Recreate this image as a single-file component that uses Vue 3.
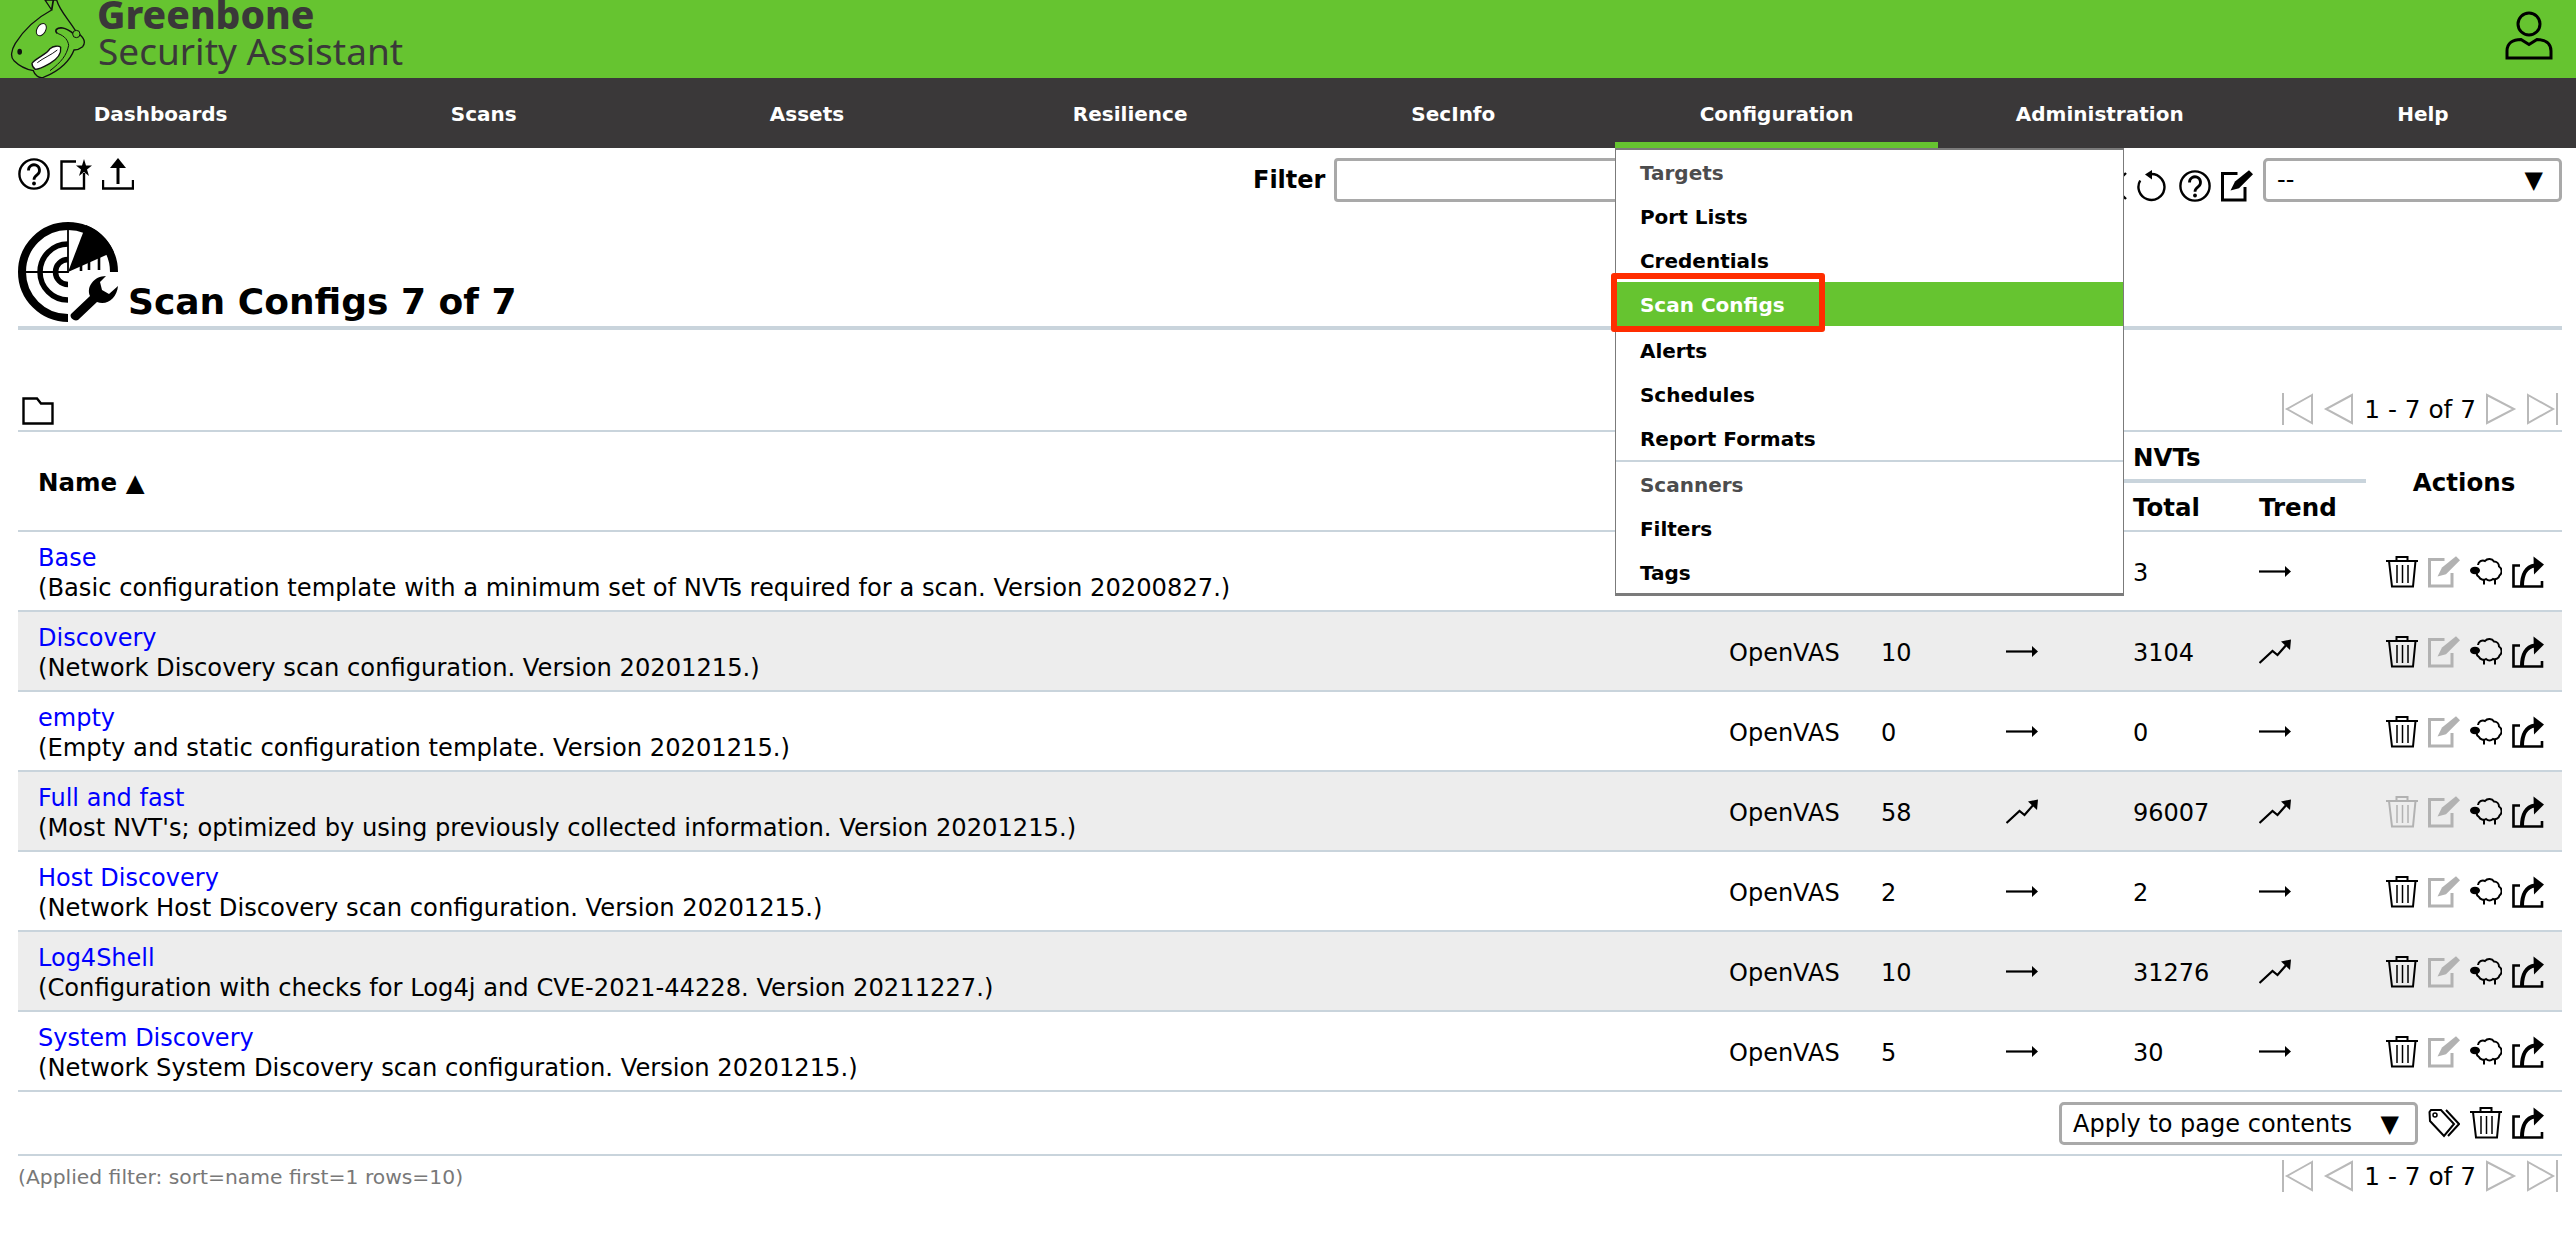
<template>
  <div class="page">
    <!-- shared icons -->
    <svg class="sprite" xmlns="http://www.w3.org/2000/svg">
      <symbol id="i-help" viewBox="0 0 32 32">
        <circle cx="16" cy="16" r="14.6" fill="none" stroke="currentColor" stroke-width="2.4" />
        <path d="M10.5 12.5a5.500 5.500 0 1 1 8.800 4.200c-2 1.500-3.300 2.500-3.300 5" fill="none" stroke="currentColor" stroke-width="2.8" />
        <circle cx="16" cy="25.500" r="1.900" fill="currentColor" />
      </symbol>
      <symbol id="i-edit" viewBox="0 0 32 32">
        <path d="M16.500 3.500H1.500V30H24V17" fill="none" stroke="currentColor" stroke-width="3" />
        <path d="M9.500 20.500L14 11.500L28 0.300L32 4.300L18 18.300Z" fill="currentColor" />
      </symbol>
      <symbol id="i-trash" viewBox="0 0 32 32">
        <path d="M0 5H32M10.500 5V1H21.500V5M3 5L6 30.500H27L29.500 5" fill="none" stroke="currentColor" stroke-width="2" />
        <path d="M11 9V27M16.500 9V27M22 9V27" fill="none" stroke="currentColor" stroke-width="1.500" />
      </symbol>
      <symbol id="i-sheep" viewBox="0 0 32 32">
        <path d="M8 9a5 5 0 0 1 7-4a5.500 5.500 0 0 1 9 .5a5 5 0 0 1 5 5a5.500 5.500 0 0 1 .5 9a5 5 0 0 1-6.500 3.500a5.500 5.500 0 0 1-7 0a5 5 0 0 1-7-2a5 5 0 0 1-2-6" fill="none" stroke="currentColor" stroke-width="2" />
        <ellipse cx="5" cy="14.500" rx="5" ry="3.800" fill="currentColor" />
        <path d="M14 23V28.500M25 23V28.500" fill="none" stroke="currentColor" stroke-width="2" />
      </symbol>
      <symbol id="i-export" viewBox="0 0 32 32">
        <path d="M8 9.500H1.500V30.500H30V25" fill="none" stroke="currentColor" stroke-width="2.600" />
        <path d="M10 30C10 19 14 10.500 23 9.500" fill="none" stroke="currentColor" stroke-width="4" />
        <path d="M21.500 0.500L32 8.500L22 18.500Z" fill="currentColor" />
      </symbol>
      <symbol id="i-flat" viewBox="0 0 32 32">
        <path d="M0 15.500H28" fill="none" stroke="currentColor" stroke-width="2.200" />
        <path d="M26 10L32 15.500L26 21Z" fill="currentColor" />
      </symbol>
      <symbol id="i-up" viewBox="0 0 32 32">
        <path d="M0.500 27L13.500 15L18.500 19L29 7" fill="none" stroke="currentColor" stroke-width="2.200" />
        <path d="M22 5.500L32 3.500L31 14Z" fill="currentColor" />
      </symbol>
      <symbol id="i-first" viewBox="0 0 32 32">
        <path d="M1 0V32M30 2L5 16L30 30Z" fill="none" stroke="currentColor" stroke-width="2" />
      </symbol>
      <symbol id="i-prev" viewBox="0 0 32 32">
        <path d="M29 2L3 16L29 30Z" fill="none" stroke="currentColor" stroke-width="2" />
      </symbol>
      <symbol id="i-next" viewBox="0 0 32 32">
        <path d="M2 2L29 16L2 30Z" fill="none" stroke="currentColor" stroke-width="2" />
      </symbol>
      <symbol id="i-last" viewBox="0 0 32 32">
        <path d="M31 0V32M2 2L27 16L2 30Z" fill="none" stroke="currentColor" stroke-width="2" />
      </symbol>
    </svg>

    <header class="topbar">
      <div class="brand">
        <svg class="dragon" viewBox="0 0 300 234" width="100" height="78">
          <path d="M155 30L135 0H160L170 0C178 30 205 58 225 90C245 108 262 122 248 140C235 150 225 150 222 150C212 178 182 212 130 232C116 236 104 224 100 212C80 208 56 196 42 182C30 172 34 150 46 130C70 92 110 54 155 30Z" fill="#66c430" stroke="#111" stroke-width="4" />
          <path d="M155 30L160 0M172 100C162 92 170 82 188 84C202 86 212 94 222 102" fill="none" stroke="#111" stroke-width="5" />
          <path d="M172 100C196 108 204 122 206 136C200 166 184 186 150 212" fill="none" stroke="#111" stroke-width="3" />
          <path d="M96 190C110 172 140 164 150 146C160 138 176 136 182 142C184 158 174 176 150 190C132 200 120 208 106 208C100 204 96 198 96 190Z" fill="#fff" stroke="#111" stroke-width="4" />
          <path d="M112 188C130 174 152 166 172 150" fill="none" stroke="#111" stroke-width="3" />
          <ellipse cx="124" cy="89" rx="13" ry="20" transform="rotate(30 124 89)" fill="#fff" stroke="#111" stroke-width="3" />
          <ellipse cx="59" cy="155" rx="7" ry="9" fill="#111" />
          <circle cx="229" cy="102" r="11" fill="#66c430" stroke="#111" stroke-width="3" />
        </svg>
        <div class="brand-text">
          <span class="brand-main">Greenbone</span>
          <span class="brand-sub">Security Assistant</span>
        </div>
      </div>
      <svg class="user" viewBox="0 0 48 50" width="48" height="50">
        <circle cx="24" cy="14" r="11" fill="none" stroke="#000" stroke-width="3" />
        <path d="M2 48V41C2 33 8 29.500 16 29.500L24 34.500L32 29.500C40 29.500 46 33 46 41V48Z" fill="none" stroke="#000" stroke-width="3" />
      </svg>
    </header>

    <nav class="mainnav">
      <div
        v-for="item in navItems"
        :key="item"
        class="nav-item"
        :class="{ active: item === 'Configuration' }"
      >
        {{ item }}
        <ul v-if="item === 'Configuration'" class="menu">
          <li
            v-for="entry in menuItems"
            :key="entry.label"
            class="menu-item"
            :class="{ muted: entry.muted, current: entry.current, split: entry.split }"
          >
            {{ entry.label }}
            <span v-if="entry.current" class="mark"></span>
          </li>
        </ul>
      </div>
    </nav>

    <section class="toolbar">
      <div class="tools">
        <svg class="icon"><use href="#i-help" /></svg>
        <svg class="icon" viewBox="0 0 32 32">
          <path d="M16 3.500H1.500V30.500H24V15" fill="none" stroke="#000" stroke-width="2.400" />
          <path d="M24 1L26 7.500H32L27 11.500L29 18L24 14L19 18L21 11.500L16 7.500H22Z" fill="#000" />
        </svg>
        <svg class="icon" viewBox="0 0 32 32">
          <path d="M1 22V30.500H31V22" fill="none" stroke="#000" stroke-width="2.400" />
          <path d="M16 26V6" fill="none" stroke="#000" stroke-width="3" />
          <path d="M16 0L24 10H8Z" fill="#000" />
        </svg>
      </div>
      <div class="filter">
        <label class="filter-label">Filter</label>
        <div class="filter-input"></div>
        <div class="filter-icons">
          <svg class="icon" viewBox="0 0 32 32">
            <path d="M5 3L31 29M31 3L5 29" fill="none" stroke="#000" stroke-width="2.400" />
          </svg>
          <svg class="icon" viewBox="0 0 32 32">
            <path d="M3.200 10.500A13 13 0 1 0 14.500 4" fill="none" stroke="#000" stroke-width="2.400" />
            <path d="M8 4.500L15 0V9.500Z" fill="#000" />
          </svg>
          <svg class="icon"><use href="#i-help" /></svg>
          <svg class="icon"><use href="#i-edit" /></svg>
        </div>
        <div class="picker filter-picker">
          <span>--</span>
          <span class="caret">▼</span>
        </div>
      </div>
    </section>

    <section class="heading">
      <svg class="radar" viewBox="0 0 100 100" width="100" height="100">
        <path d="M96 50A46 46 0 1 0 50 96" fill="none" stroke="#000" stroke-width="8" />
        <path d="M50 22A28 28 0 0 0 50 78" fill="none" stroke="#000" stroke-width="5.500" />
        <path d="M50 37.500A12.500 12.500 0 0 0 50 62.500" fill="none" stroke="#000" stroke-width="5.500" />
        <path d="M50 50L68 3A50 50 0 0 1 95.700 29.700Z" fill="#000" />
        <path d="M50 4V50H4" fill="none" stroke="#000" stroke-width="1.800" />
        <path d="M63 43V49M71 39V48M81 33V48" fill="none" stroke="#000" stroke-width="2.600" />
        <path d="M88 54C76 54 68 65 72 74L53 92C51 95 56 100 60 98L79 80C89 84 99 76 100 64L91 72L84 68L82 60Z" fill="#000" stroke="#fff" stroke-width="2" paint-order="stroke" />
      </svg>
      <h1>Scan Configs 7 of 7</h1>
    </section>

    <section class="listbar">
      <svg class="folder" viewBox="0 0 32 28" width="32" height="28">
        <path d="M1.500 1.500H15L19 6.500H30.500V26.500H1.500Z" fill="none" stroke="#000" stroke-width="2.400" />
      </svg>
      <div class="pager">
        <svg class="icon"><use href="#i-first" /></svg>
        <svg class="icon"><use href="#i-prev" /></svg>
        <span class="pager-text">1 - 7 of 7</span>
        <svg class="icon"><use href="#i-next" /></svg>
        <svg class="icon"><use href="#i-last" /></svg>
      </div>
    </section>

    <table class="configs">
      <colgroup>
        <col class="c-name" />
        <col class="c-type" />
        <col class="c-fam" />
        <col class="c-trend" />
        <col class="c-total" />
        <col class="c-trend2" />
        <col class="c-actions" />
      </colgroup>
      <thead>
        <tr class="head-top">
          <th rowspan="2" class="name-head">Name ▲</th>
          <th rowspan="2"></th>
          <th colspan="2"></th>
          <th colspan="2" class="group">NVTs</th>
          <th rowspan="2" class="actions-head">Actions</th>
        </tr>
        <tr class="head-sub">
          <th></th>
          <th></th>
          <th>Total</th>
          <th>Trend</th>
        </tr>
      </thead>
      <tbody>
        <tr v-for="config in configs" :key="config.name">
          <td>
            <a class="name-link">{{ config.name }}</a>
            <div class="comment">({{ config.comment }})</div>
          </td>
          <!-- these three cells of the first row sit under the open menu -->
          <td><template v-if="config.families !== undefined">OpenVAS</template></td>
          <td>{{ config.families }}</td>
          <td>
            <svg v-if="config.families !== undefined" class="icon"><use :href="config.familyUp ? '#i-up' : '#i-flat'" /></svg>
          </td>
          <td>{{ config.nvts }}</td>
          <td><svg class="icon"><use :href="config.nvtUp ? '#i-up' : '#i-flat'" /></svg></td>
          <td>
            <div class="row-actions">
              <svg class="icon" :class="{ off: config.locked }"><use href="#i-trash" /></svg>
              <svg class="icon off"><use href="#i-edit" /></svg>
              <svg class="icon"><use href="#i-sheep" /></svg>
              <svg class="icon"><use href="#i-export" /></svg>
            </div>
          </td>
        </tr>
      </tbody>
    </table>

    <section class="bulk">
      <div class="picker bulk-picker">
        <span>Apply to page contents</span>
        <span class="caret">▼</span>
      </div>
      <svg class="icon" viewBox="0 0 32 32">
        <path d="M1.500 5L3 3L13 3L26 17L16 29L2 14Z" fill="none" stroke="#000" stroke-width="2" />
        <circle cx="7" cy="8" r="2" fill="none" stroke="#000" stroke-width="1.500" />
        <path d="M18 3L31 17L20 29" fill="none" stroke="#000" stroke-width="2" />
      </svg>
      <svg class="icon"><use href="#i-trash" /></svg>
      <svg class="icon"><use href="#i-export" /></svg>
    </section>

    <footer class="footer">
      <span class="applied">(Applied filter: sort=name first=1 rows=10)</span>
      <div class="pager">
        <svg class="icon"><use href="#i-first" /></svg>
        <svg class="icon"><use href="#i-prev" /></svg>
        <span class="pager-text">1 - 7 of 7</span>
        <svg class="icon"><use href="#i-next" /></svg>
        <svg class="icon"><use href="#i-last" /></svg>
      </div>
    </footer>
  </div>
</template>

<script setup>
const navItems = [
  'Dashboards',
  'Scans',
  'Assets',
  'Resilience',
  'SecInfo',
  'Configuration',
  'Administration',
  'Help'
];

const menuItems = [
  { label: 'Targets', muted: true },
  { label: 'Port Lists' },
  { label: 'Credentials' },
  { label: 'Scan Configs', current: true },
  { label: 'Alerts' },
  { label: 'Schedules' },
  { label: 'Report Formats', split: true },
  { label: 'Scanners', muted: true },
  { label: 'Filters' },
  { label: 'Tags' }
];

const configs = [
  {
    name: 'Base',
    comment: 'Basic configuration template with a minimum set of NVTs required for a scan. Version 20200827.',
    nvts: 3
  },
  {
    name: 'Discovery',
    comment: 'Network Discovery scan configuration. Version 20201215.',
    families: 10,
    nvts: 3104,
    nvtUp: true
  },
  {
    name: 'empty',
    comment: 'Empty and static configuration template. Version 20201215.',
    families: 0,
    nvts: 0
  },
  {
    name: 'Full and fast',
    comment: "Most NVT's; optimized by using previously collected information. Version 20201215.",
    families: 58,
    familyUp: true,
    nvts: 96007,
    nvtUp: true,
    locked: true
  },
  {
    name: 'Host Discovery',
    comment: 'Network Host Discovery scan configuration. Version 20201215.',
    families: 2,
    nvts: 2
  },
  {
    name: 'Log4Shell',
    comment: 'Configuration with checks for Log4j and CVE-2021-44228. Version 20211227.',
    families: 10,
    nvts: 31276,
    nvtUp: true
  },
  {
    name: 'System Discovery',
    comment: 'Network System Discovery scan configuration. Version 20201215.',
    families: 5,
    nvts: 30
  }
];
</script>

<style>
html,
body {
  background: #fff;
}
</style>

<style scoped>
.page {
  font-family: "DejaVu Sans", Verdana, sans-serif;
  font-size: 24px;
  color: #000;
  min-height: 1256px;
  overflow: hidden;
}

.sprite {
  display: none;
}

.icon {
  width: 32px;
  height: 32px;
  flex: none;
  display: block;
  color: #000;
}

.icon.off {
  color: #b2b2b2;
}

.topbar {
  height: 78px;
  background: #66c430;
  display: flex;
  justify-content: space-between;
  overflow: hidden;
}

.brand {
  display: flex;
}

.dragon {
  flex: none;
}

.brand-text {
  display: flex;
  flex-direction: column;
  margin-left: -3px;
  color: #3a3839;
  font-family: "Noto Sans", sans-serif;
}

.brand-main {
  font-size: 39px;
  font-weight: 800;
  line-height: 28px;
}

.brand-sub {
  font-size: 37px;
  font-weight: 400;
  line-height: 45px;
  padding-left: 1px;
}

.user {
  margin: 10px 23px 0 0;
}

.mainnav {
  height: 70px;
  margin-left: -1px;
  background: #3a3839;
  display: grid;
  grid-template-columns: repeat(8, 323.2px);
}

.nav-item {
  position: relative;
  display: flex;
  align-items: center;
  justify-content: center;
  box-sizing: border-box;
  padding-top: 2px;
  color: #fff;
  font-size: 20px;
  font-weight: 700;
}

.nav-item.active {
  box-shadow: inset 0 -6px 0 #66c430;
}

.menu {
  position: absolute;
  top: 100%;
  left: 0;
  z-index: 5;
  width: 509px;
  height: 448px;
  box-sizing: border-box;
  margin: 0;
  padding: 0;
  list-style: none;
  background: #fff;
  border: solid #7b7b7b;
  border-width: 2px 1px 3px 1px;
}

.menu-item {
  position: relative;
  height: 44px;
  line-height: 46px;
  padding-left: 24px;
  color: #000;
  font-size: 20px;
}

.menu-item.muted {
  color: #4c4c4d;
}

.menu-item.current {
  background: #66c430;
  color: #fff;
  margin-bottom: 2px;
}

.menu-item.split {
  height: 46px;
  box-sizing: border-box;
  border-bottom: 2px solid #c9d4dc;
}

.mark {
  position: absolute;
  left: -5px;
  top: -9px;
  width: 214px;
  height: 59px;
  box-sizing: border-box;
  border: 6px solid #ff2d00;
  border-radius: 3px;
}

.toolbar {
  display: flex;
  justify-content: space-between;
  padding: 10px 14px 0 18px;
  height: 54px;
  box-sizing: border-box;
}

.tools {
  display: flex;
  gap: 10px;
}

.filter {
  display: flex;
  width: 1309px;
  align-items: center;
  height: 44px;
}

.filter-label {
  font-weight: 700;
  width: 81px;
  flex: none;
}

.filter-input {
  flex: 1;
  height: 44px;
  box-sizing: border-box;
  border: 3px solid #a9a9a9;
  border-radius: 4px;
}

.filter-icons {
  display: flex;
  gap: 10px;
  margin: 12px 10px 0 10px;
}

.picker {
  display: flex;
  align-items: center;
  justify-content: space-between;
  box-sizing: border-box;
  height: 44px;
  border: 3px solid #a9a9a9;
  border-radius: 5px;
  padding: 0 16px 0 11px;
  background: #fff;
}

.filter-picker {
  width: 299px;
  flex: none;
}

.caret {
  font-size: 24px;
}

.heading {
  display: flex;
  align-items: flex-end;
  gap: 10px;
  margin: 20px 14px 0 18px;
  padding-bottom: 4px;
  border-bottom: 4px solid #c9d4dc;
}

.radar {
  flex: none;
}

h1 {
  margin: 0 0 -2px;
  font-size: 36px;
  line-height: 44px;
  font-weight: 700;
}

.listbar {
  display: flex;
  justify-content: space-between;
  align-items: flex-end;
  height: 102px;
  box-sizing: border-box;
  margin: 0 14px 0 18px;
  padding: 0 4px 5px;
  border-bottom: 2px solid #c9d4dc;
}

.pager {
  display: flex;
  align-items: center;
  gap: 9px;
}

.pager .icon {
  color: #b9b9b9;
}

.pager-text {
  font-size: 24.8px;
}

.configs {
  width: 2544px;
  margin-left: 18px;
  border-collapse: collapse;
  table-layout: fixed;
}

.c-name { width: 1691px; }
.c-type { width: 152px; }
.c-fam { width: 125px; }
.c-trend { width: 127px; }
.c-total { width: 126px; }
.c-trend2 { width: 127px; }
.c-actions { width: 196px; }

th {
  text-align: left;
  font-size: 24.5px;
  font-weight: 700;
  padding: 0 0 0 20px;
}

.head-top th {
  height: 51px;
}

.head-sub th {
  height: 45px;
  padding-top: 2px;
}

.name-head,
.actions-head {
  padding-top: 3px;
}

.group {
  box-shadow: inset 0 -4px 0 #c9d4dc;
}

.actions-head {
  text-align: center;
  padding-left: 0;
}

thead {
  border-bottom: 2px solid #c9d4dc;
}

td {
  height: 74px;
  padding: 4px 0 0 20px;
  line-height: 30px;
  vertical-align: middle;
}

td .icon {
  margin-top: -2px;
}

.comment {
  font-size: 24.2px;
  line-height: 31px;
}

tbody tr {
  border-bottom: 2px solid #c9d4dc;
}

tbody tr:nth-child(even) {
  background: #ededed;
}

.name-link {
  color: #0000ff;
  cursor: pointer;
}

.row-actions {
  display: flex;
  gap: 10px;
}

.bulk {
  display: flex;
  justify-content: flex-end;
  align-items: center;
  gap: 10px;
  height: 64px;
  box-sizing: border-box;
  margin: 0 14px 0 18px;
  padding: 0 18px 0 0;
  border-bottom: 2px solid #c9d4dc;
}

.bulk-picker {
  width: 359px;
  height: 43px;
  padding-top: 2px;
}

.footer {
  display: flex;
  justify-content: space-between;
  margin: 3px 14px 0 18px;
  padding-right: 4px;
}

.applied {
  font-size: 20.3px;
  line-height: 32px;
  padding-top: 2px;
  color: #787878;
}
</style>
